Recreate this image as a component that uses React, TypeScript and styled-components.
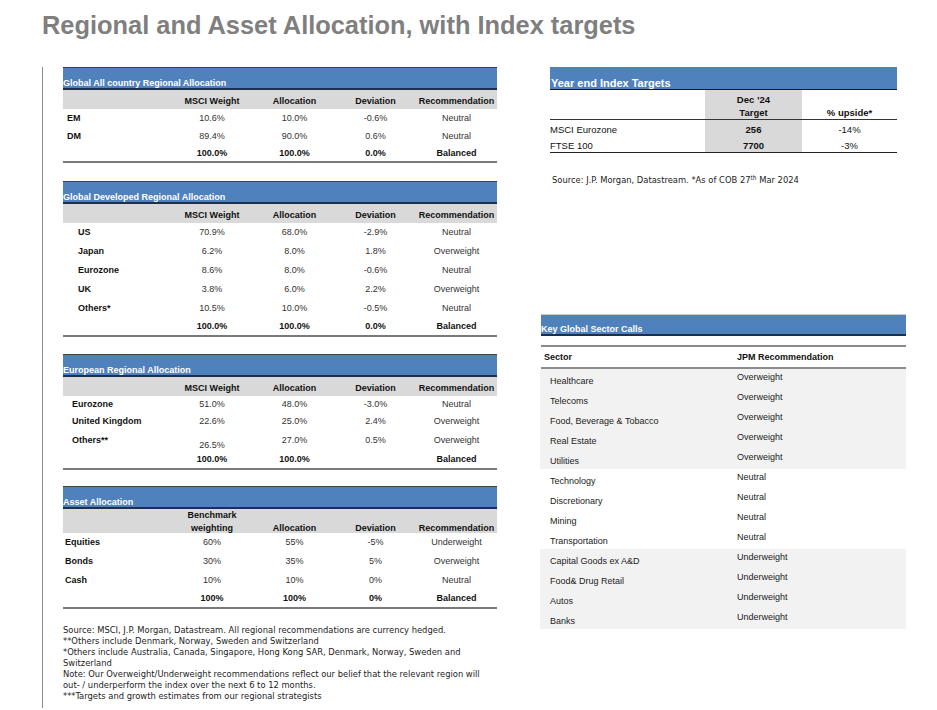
import React from 'react';
import styled, { createGlobalStyle } from 'styled-components';

const GlobalStyle = createGlobalStyle`
  html, body { margin: 0; padding: 0; background: #ffffff; }
  body { font-family: "Liberation Sans", Arial, sans-serif; color: #000; }
  * { box-sizing: border-box; }
`;

const Page = styled.div`
  width: 937px;
  height: 710px;
  overflow: hidden;
  padding: 10px 0 0 42px;
`;

const Title = styled.h1`
  margin: 0;
  font-size: 25.4px;
  line-height: 30px;
  font-weight: 700;
  color: #7f7f7f;
`;

const Columns = styled.div`
  display: flex;
  align-items: flex-start;
  margin-top: 27px;
`;

const LeftCol = styled.div`
  border-left: 1px solid #8c8c8c;
  padding-left: 20px;
  height: 641px;
  width: 455px;
`;

const TableWrap = styled.section<{ $mt: number }>`
  margin-top: ${p => p.$mt}px;
  width: 434px;
  border-bottom: 2px solid #7a7a7a;
`;

const BlueBar = styled.div`
  height: 23px;
  background: #4f81bd;
  border-top: 1px solid #404040;
  border-bottom: 2px solid #1c2f4d;
  display: flex;
  align-items: flex-end;
  color: #ffffff;
  font-weight: 700;
  font-size: 9px;
  line-height: 10px;
  white-space: nowrap;
`;

const Grid = styled.div<{ $h: number }>`
  display: grid;
  grid-template-columns: 107px 84px 81px 81px 81px;
  height: ${p => p.$h}px;
`;

const HeadRow = styled(Grid)`
  background: #d9d9d9;
  align-items: end;
  padding-bottom: 1px;
`;

const HeadCell = styled.div`
  font-size: 9px;
  line-height: 13px;
  font-weight: 700;
  text-align: center;
  white-space: nowrap;
  color: #111;
`;

const BodyRow = styled(Grid)`
  align-items: center;
`;

const LabelCell = styled.div<{ $indent: number }>`
  padding-left: ${p => p.$indent}px;
  font-size: 9px;
  line-height: 11px;
  font-weight: 700;
  white-space: nowrap;
  color: #111;
`;

const ValueCell = styled.div<{ $bold?: boolean; $drop?: number }>`
  font-size: 9px;
  line-height: 11px;
  text-align: center;
  white-space: nowrap;
  font-weight: ${p => (p.$bold ? 700 : 400)};
  color: ${p => (p.$bold ? '#111' : '#333')};
  padding-top: ${p => (p.$drop ? p.$drop * 2 : 0)}px;
`;

const Notes = styled.div`
  margin-top: 15px;
  font-family: "DejaVu Sans Condensed", "DejaVu Sans", sans-serif;
  font-stretch: condensed;
  font-size: 9.3px;
  line-height: 11px;
  color: #222;
`;

const NoteLine = styled.div`
  white-space: nowrap;
`;

const RightCol = styled.div`
  margin-left: 44px;
  width: 366px;
  display: flex;
  flex-direction: column;
`;

const TargetsBlock = styled.section`
  margin-left: 9px;
  width: 347px;
  border-bottom: 1px solid #222;
`;

const TargetsBar = styled.div`
  height: 23px;
  background: #4f81bd;
  border-bottom: 1px solid #1a1a1a;
  color: #ffffff;
  font-weight: 700;
  font-size: 11px;
  line-height: 12px;
  display: flex;
  align-items: flex-end;
  padding-left: 1px;
  white-space: nowrap;
`;

const TargetsRow = styled.div<{ $h: number; $head?: boolean }>`
  display: grid;
  grid-template-columns: 155px 97px 95px;
  height: ${p => p.$h}px;
  border-bottom: ${p => (p.$head ? '1px solid #333' : 'none')};
`;

const TCell = styled.div<{ $gray?: boolean; $bold?: boolean; $align: 'left' | 'center'; $pt: number; $end?: boolean }>`
  background: ${p => (p.$gray ? '#d9d9d9' : 'transparent')};
  font-size: 9.5px;
  line-height: ${p => (p.$end ? '12.5px' : '12px')};
  font-weight: ${p => (p.$bold ? 700 : 400)};
  text-align: ${p => p.$align};
  padding-top: ${p => p.$pt}px;
  white-space: nowrap;
  color: #111;
  display: flex;
  flex-direction: column;
  justify-content: ${p => (p.$end ? 'flex-end' : 'flex-start')};
`;

const SourceNote = styled.div`
  margin: 21px 0 0 11px;
  font-family: "DejaVu Sans Condensed", "DejaVu Sans", sans-serif;
  font-stretch: condensed;
  font-size: 9.3px;
  line-height: 11px;
  color: #222;
  white-space: nowrap;
  sup {
    font-size: 6.5px;
    vertical-align: 3px;
    line-height: 0;
  }
`;

const SectorBlock = styled.section`
  margin-top: 129px;
  width: 365px;
`;

const SectorBar = styled.div`
  height: 22px;
  background: #4f81bd;
  border-top: 1px solid #c9c9c9;
  border-bottom: 2px solid #1c2f4d;
  color: #ffffff;
  font-weight: 700;
  font-size: 9px;
  line-height: 10px;
  display: flex;
  align-items: flex-end;
  white-space: nowrap;
`;

const SectorHead = styled.div`
  margin-top: 9px;
  height: 24px;
  border-top: 2px solid #8c8c8c;
  border-bottom: 2px solid #8c8c8c;
  display: grid;
  grid-template-columns: 196px 1fr;
  align-items: center;
  font-size: 9px;
  line-height: 11px;
  font-weight: 700;
  color: #111;
`;

const SectorHeadLabel = styled.div`
  padding-left: 3px;
`;

const SectorRow = styled.div<{ $shade: boolean }>`
  display: grid;
  grid-template-columns: 196px 1fr;
  height: 20px;
  margin-left: -1px;
  background: ${p => (p.$shade ? '#f2f2f2' : '#ffffff')};
`;

const SectorName = styled.div`
  padding: 6px 0 0 10px;
  font-size: 9px;
  line-height: 12px;
  color: #222;
  white-space: nowrap;
`;

const SectorRec = styled.div`
  padding: 2px 0 0 1px;
  font-size: 9px;
  line-height: 12px;
  color: #222;
  white-space: nowrap;
`;

type Row = { label: string; cells: string[]; h: number; total?: boolean; drop?: number[] };
type Table = {
  title: string;
  mt: number;
  indent: number;
  headH: number;
  head: React.ReactNode[];
  rows: Row[];
};

const stdHead = ['MSCI Weight', 'Allocation', 'Deviation', 'Recommendation'];

const tables: Table[] = [
  {
    title: 'Global All country Regional Allocation',
    mt: 0,
    indent: 4,
    headH: 19,
    head: stdHead,
    rows: [
      { label: 'EM', cells: ['10.6%', '10.0%', '-0.6%', 'Neutral'], h: 18 },
      { label: 'DM', cells: ['89.4%', '90.0%', '0.6%', 'Neutral'], h: 18 },
      { label: '', cells: ['100.0%', '100.0%', '0.0%', 'Balanced'], h: 16, total: true },
    ],
  },
  {
    title: 'Global Developed Regional Allocation',
    mt: 18,
    indent: 15,
    headH: 19,
    head: stdHead,
    rows: [
      { label: 'US', cells: ['70.9%', '68.0%', '-2.9%', 'Neutral'], h: 19 },
      { label: 'Japan', cells: ['6.2%', '8.0%', '1.8%', 'Overweight'], h: 19 },
      { label: 'Eurozone', cells: ['8.6%', '8.0%', '-0.6%', 'Neutral'], h: 19 },
      { label: 'UK', cells: ['3.8%', '6.0%', '2.2%', 'Overweight'], h: 19 },
      { label: 'Others*', cells: ['10.5%', '10.0%', '-0.5%', 'Neutral'], h: 19 },
      { label: '', cells: ['100.0%', '100.0%', '0.0%', 'Balanced'], h: 17, total: true },
    ],
  },
  {
    title: 'European Regional Allocation',
    mt: 17,
    indent: 9,
    headH: 19,
    head: stdHead,
    rows: [
      { label: 'Eurozone', cells: ['51.0%', '48.0%', '-3.0%', 'Neutral'], h: 16 },
      { label: 'United Kingdom', cells: ['22.6%', '25.0%', '2.4%', 'Overweight'], h: 18 },
      { label: 'Others**', cells: ['26.5%', '27.0%', '0.5%', 'Overweight'], h: 20, drop: [5, 0, 0, 0] },
      { label: '', cells: ['100.0%', '100.0%', '', 'Balanced'], h: 18, total: true },
    ],
  },
  {
    title: 'Asset Allocation',
    mt: 16,
    indent: 2,
    headH: 24,
    head: [
      <>
        Benchmark
        <br />
        weighting
      </>,
      'Allocation',
      'Deviation',
      'Recommendation',
    ],
    rows: [
      { label: 'Equities', cells: ['60%', '55%', '-5%', 'Underweight'], h: 19 },
      { label: 'Bonds', cells: ['30%', '35%', '5%', 'Overweight'], h: 19 },
      { label: 'Cash', cells: ['10%', '10%', '0%', 'Neutral'], h: 19 },
      { label: '', cells: ['100%', '100%', '0%', 'Balanced'], h: 17, total: true },
    ],
  },
];

const notes = [
  'Source: MSCI, J.P. Morgan, Datastream. All regional recommendations are currency hedged.',
  '**Others include Denmark, Norway, Sweden and Switzerland',
  '*Others include Australia, Canada, Singapore, Hong Kong SAR, Denmark, Norway, Sweden and',
  'Switzerland',
  'Note: Our Overweight/Underweight recommendations reflect our belief that the relevant region will',
  'out- / underperform the index over the next 6 to 12 months.',
  '***Targets and growth estimates from our regional strategists',
];

const sectors: { name: string; rec: string; shade: boolean }[] = [
  { name: 'Healthcare', rec: 'Overweight', shade: true },
  { name: 'Telecoms', rec: 'Overweight', shade: true },
  { name: 'Food, Beverage & Tobacco', rec: 'Overweight', shade: true },
  { name: 'Real Estate', rec: 'Overweight', shade: true },
  { name: 'Utilities', rec: 'Overweight', shade: true },
  { name: 'Technology', rec: 'Neutral', shade: false },
  { name: 'Discretionary', rec: 'Neutral', shade: false },
  { name: 'Mining', rec: 'Neutral', shade: false },
  { name: 'Transportation', rec: 'Neutral', shade: false },
  { name: 'Capital Goods ex A&D', rec: 'Underweight', shade: true },
  { name: 'Food& Drug Retail', rec: 'Underweight', shade: true },
  { name: 'Autos', rec: 'Underweight', shade: true },
  { name: 'Banks', rec: 'Underweight', shade: true },
];

function AllocationTable({ t }: { t: Table }) {
  return (
    <TableWrap $mt={t.mt}>
      <BlueBar>{t.title}</BlueBar>
      <HeadRow $h={t.headH}>
        <HeadCell />
        {t.head.map((h, i) => (
          <HeadCell key={i}>{h}</HeadCell>
        ))}
      </HeadRow>
      {t.rows.map((r, ri) => (
        <BodyRow key={ri} $h={r.h}>
          <LabelCell $indent={t.indent}>{r.label}</LabelCell>
          {r.cells.map((c, ci) => (
            <ValueCell key={ci} $bold={r.total} $drop={r.drop ? r.drop[ci] : 0}>
              {c}
            </ValueCell>
          ))}
        </BodyRow>
      ))}
    </TableWrap>
  );
}

export default function App() {
  return (
    <>
      <GlobalStyle />
      <Page>
        <Title>Regional and Asset Allocation, with Index targets</Title>
        <Columns>
          <LeftCol>
            {tables.map((t, i) => (
              <AllocationTable key={i} t={t} />
            ))}
            <Notes>
              {notes.map((n, i) => (
                <NoteLine key={i}>{n}</NoteLine>
              ))}
            </Notes>
          </LeftCol>
          <RightCol>
            <TargetsBlock>
              <TargetsBar>Year end Index Targets</TargetsBar>
              <TargetsRow $h={30} $head>
                <TCell $align="left" $pt={0} />
                <TCell $gray $bold $align="center" $pt={0} $end>
                  <span>Dec ’24</span>
                  <span>Target</span>
                </TCell>
                <TCell $bold $align="center" $pt={0} $end>
                  <span>% upside*</span>
                </TCell>
              </TargetsRow>
              <TargetsRow $h={17}>
                <TCell $align="left" $pt={4}>MSCI Eurozone</TCell>
                <TCell $gray $bold $align="center" $pt={4}>256</TCell>
                <TCell $align="center" $pt={4}>-14%</TCell>
              </TargetsRow>
              <TargetsRow $h={15}>
                <TCell $align="left" $pt={3}>FTSE 100</TCell>
                <TCell $gray $bold $align="center" $pt={3}>7700</TCell>
                <TCell $align="center" $pt={3}>-3%</TCell>
              </TargetsRow>
            </TargetsBlock>
            <SourceNote>
              Source: J.P. Morgan, Datastream. *As of COB 27<sup>th</sup> Mar 2024
            </SourceNote>
            <SectorBlock>
              <SectorBar>Key Global Sector Calls</SectorBar>
              <SectorHead>
                <SectorHeadLabel>Sector</SectorHeadLabel>
                <div>JPM Recommendation</div>
              </SectorHead>
              {sectors.map((s, i) => (
                <SectorRow key={i} $shade={s.shade}>
                  <SectorName>{s.name}</SectorName>
                  <SectorRec>{s.rec}</SectorRec>
                </SectorRow>
              ))}
            </SectorBlock>
          </RightCol>
        </Columns>
      </Page>
    </>
  );
}
